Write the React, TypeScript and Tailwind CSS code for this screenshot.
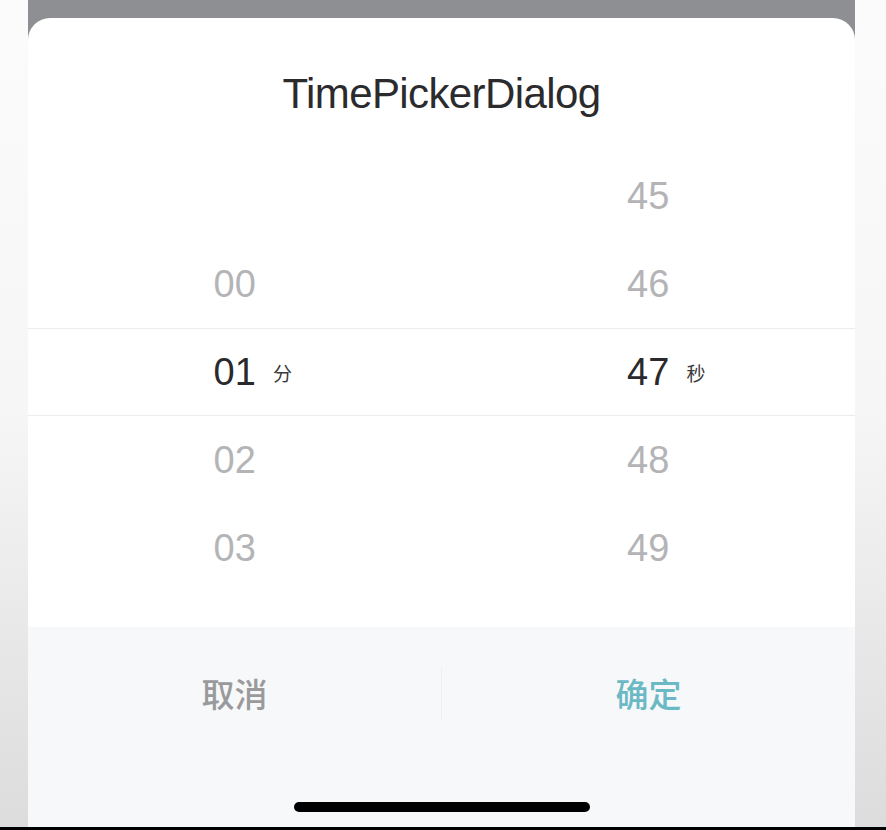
import React from "react";

interface PickerRow {
  minute: string;
  second: string;
  active?: boolean;
}

const rows: PickerRow[] = [
  { minute: "", second: "45" },
  { minute: "00", second: "46" },
  { minute: "01", second: "47", active: true },
  { minute: "02", second: "48" },
  { minute: "03", second: "49" },
];

const Cell = ({ value, unit, active }: { value: string; unit: string; active?: boolean }) => {
  return (
    <div className="flex-1 grid grid-cols-[1fr_auto_1fr] items-center h-full">
      <div />
      <span
        className={
          active
            ? "text-[38px] leading-none text-[#2a2a2c]"
            : "text-[38px] leading-none text-[#b4b4b7]"
        }
        style={{ fontFamily: '"Liberation Sans", Arial, sans-serif' }}
      >
        {value}
      </span>
      <div className="flex items-center">
        {active && (
          <span
            className="ml-[17px] text-[19px] leading-none text-[#3a3a3c]"
            style={{ fontFamily: '"Noto Sans CJK SC", sans-serif' }}
          >
            {unit}
          </span>
        )}
      </div>
    </div>
  );
};

const App = () => {
  return (
    <div className="w-[886px] h-[830px] flex flex-col overflow-hidden bg-[#f4f4f4]">
      <div className="flex flex-1 min-h-0">
        <div className="w-[28px] bg-gradient-to-b from-[#fbfbfb] via-[#f6f6f6] to-[#dcdcdc]" />
        <div className="flex-1 flex flex-col bg-[#8e8f93] pt-[18px]">
          <div className="flex-1 flex flex-col bg-white rounded-t-[22px] overflow-hidden">
            {/* title */}
            <div className="h-[134px] pt-[18px] flex items-center justify-center">
              <p
                className="text-[42px] leading-none text-[#2b2b2d] tracking-[-0.6px]"
                style={{ fontFamily: '"Liberation Sans", Arial, sans-serif' }}
              >
                TimePickerDialog
              </p>
            </div>

            {/* picker */}
            <div className="flex flex-col">
              {rows.map((r, i) => (
                <div
                  key={i}
                  className={
                    r.active
                      ? "h-[88px] flex border-y border-[#ebecef]"
                      : "h-[88px] flex"
                  }
                >
                  <Cell value={r.minute} unit="分" active={r.active} />
                  <Cell value={r.second} unit="秒" active={r.active} />
                </div>
              ))}
            </div>
            <div className="h-[35px]" />

            {/* footer */}
            <div className="flex-1 flex flex-col bg-[#f7f8fa]">
              <div className="h-[133px] flex items-center">
                <button
                  className="flex-1 text-[33px] font-medium leading-none text-[#9a9a9c]"
                  style={{ fontFamily: '"Noto Sans CJK SC", sans-serif' }}
                >
                  取消
                </button>
                <div className="w-px h-[54px] bg-[#eeeff2]" />
                <button
                  className="flex-1 text-[33px] font-medium leading-none text-[#6bb9c4]"
                  style={{ fontFamily: '"Noto Sans CJK SC", sans-serif' }}
                >
                  确定
                </button>
              </div>
              <div className="flex-1 flex items-end justify-center pb-[15px]">
                <div className="w-[296px] h-[10px] rounded-full bg-black" />
              </div>
            </div>
          </div>
        </div>
        <div className="w-[31px] bg-gradient-to-b from-[#fbfbfb] via-[#f6f6f6] to-[#dcdcdc]" />
      </div>
      <div className="h-[3px] bg-black" />
    </div>
  );
};

export default App;
